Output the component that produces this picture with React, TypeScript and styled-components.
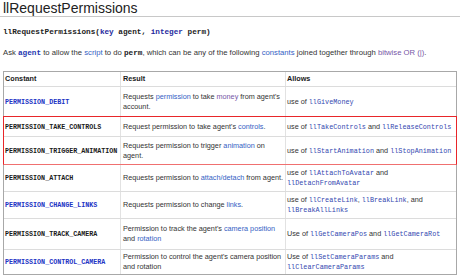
import React from "react"
import styled, { createGlobalStyle } from "styled-components"

const Global = createGlobalStyle`
  body {
    margin: 0;
    background: #fff;
    font-family: "Liberation Sans", Arial, sans-serif;
    color: #333;
  }
`

const mono = `"Liberation Mono", "Courier New", monospace`

const Page = styled.div`
  display: flex;
  flex-direction: column;
  width: 460px;
`

const Title = styled.h1`
  margin: 0;
  padding-left: 3px;
  height: 16px;
  font-size: 14px;
  line-height: 16px;
  font-weight: normal;
  color: #222;
  border-bottom: 1px solid #c8c8c8;
`

const Signature = styled.div`
  margin: 10px 0 0 3px;
  font-family: ${mono};
  font-size: 7.7px;
  line-height: 10px;
  font-weight: bold;
  color: #222;
  .type {
    color: #1f2a9e;
  }
`

const Desc = styled.p`
  margin: 10px 0 0 3px;
  font-size: 7.7px;
  line-height: 11px;
  color: #333;
`

const Link = styled.span<{ $visited?: boolean }>`
  color: ${p => (p.$visited ? "#7656a6" : "#3461c4")};
`

const Code = styled.span<{ $blue?: boolean }>`
  font-family: ${mono};
  font-weight: bold;
  font-size: 7.7px;
  color: ${p => (p.$blue ? "#2537b0" : "#222")};
`

const Fn = styled.span`
  font-family: ${mono};
  font-size: 6.8px;
  color: #3448b0;
`

const Table = styled.div`
  margin: 12px 0 0 3px;
  width: 454px;
  box-sizing: border-box;
  border: 1px solid #a8a8a8;
  display: flex;
  flex-direction: column;
`

const Row = styled.div<{ $h: number; $sep?: boolean }>`
  display: grid;
  grid-template-columns: 117px 165px 1fr;
  height: ${p => p.$h + (p.$sep ? 1 : 0)}px;
  box-sizing: border-box;
  border-top: ${p => (p.$sep ? "1px solid #dcdcdc" : "none")};
`

const Highlight = styled.div`
  margin: 0 -1px;
  border: 1px solid #e8262a;
  border-bottom-color: #f07070;
`

const Cell = styled.div<{ $pad?: number }>`
  display: flex;
  align-items: center;
  padding-left: ${p => p.$pad ?? 2}px;
  padding-right: 2px;
  box-sizing: border-box;
  border-right: 1px solid #e2e2e2;
  &:last-child {
    border-right: none;
  }
  font-size: 7.25px;
  line-height: 10px;
  color: #333;
`

const Head = styled(Cell)`
  font-weight: bold;
  color: #1a1a1a;
`

const Const = styled.span<{ $blue?: boolean }>`
  font-family: ${mono};
  font-weight: bold;
  font-size: 6.7px;
  color: ${p => (p.$blue ? "#2233c4" : "#1a1a1a")};
`

type Perm = {
  name: string
  blue?: boolean
  h: number
  sep?: boolean
  result: React.ReactNode
  allows: React.ReactNode
}

function PermRow({ p }: { p: Perm }) {
  return (
    <Row $h={p.h} $sep={p.sep}>
      <Cell $pad={1}>
        <Const $blue={p.blue}>{p.name}</Const>
      </Cell>
      <Cell>
        <div>{p.result}</div>
      </Cell>
      <Cell $pad={1}>
        <div>{p.allows}</div>
      </Cell>
    </Row>
  )
}

const debit: Perm = {
  name: "PERMISSION_DEBIT",
  blue: true,
  h: 29,
  sep: true,
  result: (
    <>
      Requests <Link>permission</Link> to take <Link $visited>money</Link> from agent's account.
    </>
  ),
  allows: (
    <>
      use of <Fn>llGiveMoney</Fn>
    </>
  ),
}

const highlighted: Perm[] = [
  {
    name: "PERMISSION_TAKE_CONTROLS",
    h: 19,
    result: (
      <>
        Request permission to take agent's <Link>controls</Link>.
      </>
    ),
    allows: (
      <>
        use of <Fn>llTakeControls</Fn> and <Fn>llReleaseControls</Fn>
      </>
    ),
  },
  {
    name: "PERMISSION_TRIGGER_ANIMATION",
    h: 27,
    sep: true,
    result: (
      <>
        Requests permission to trigger <Link>animation</Link> on agent.
      </>
    ),
    allows: (
      <>
        use of <Fn>llStartAnimation</Fn> and <Fn>llStopAnimation</Fn>
      </>
    ),
  },
]

const rest: Perm[] = [
  {
    name: "PERMISSION_ATTACH",
    h: 26,
    result: (
      <>
        Requests permission to <Link>attach/detach</Link> from agent.
      </>
    ),
    allows: (
      <>
        use of <Fn>llAttachToAvatar</Fn> and <Fn>llDetachFromAvatar</Fn>
      </>
    ),
  },
  {
    name: "PERMISSION_CHANGE_LINKS",
    blue: true,
    h: 26,
    sep: true,
    result: (
      <>
        Requests permission to change <Link>links</Link>.
      </>
    ),
    allows: (
      <>
        use of <Fn>llCreateLink</Fn>, <Fn>llBreakLink</Fn>, and <Fn>llBreakAllLinks</Fn>
      </>
    ),
  },
  {
    name: "PERMISSION_TRACK_CAMERA",
    h: 30,
    sep: true,
    result: (
      <>
        Permission to track the agent's <Link>camera position</Link> and <Link>rotation</Link>
      </>
    ),
    allows: (
      <>
        Use of <Fn>llGetCameraPos</Fn> and <Fn>llGetCameraRot</Fn>
      </>
    ),
  },
  {
    name: "PERMISSION_CONTROL_CAMERA",
    blue: true,
    h: 24,
    sep: true,
    result: <>Permission to control the agent's camera position and rotation</>,
    allows: (
      <>
        Use of <Fn>llSetCameraParams</Fn> and <Fn>llClearCameraParams</Fn>
      </>
    ),
  },
]

export default function App() {
  return (
    <Page>
      <Global />
      <Title>llRequestPermissions</Title>
      <Signature>
        llRequestPermissions(<span className="type">key</span> agent,{" "}
        <span className="type">integer</span> perm)
      </Signature>
      <Desc>
        Ask <Code $blue>agent</Code> to allow the <Link>script</Link> to do <Code>perm</Code>, which can be
        any of the following <Link>constants</Link> joined together through{" "}
        <Link $visited>bitwise OR (|)</Link>.
      </Desc>
      <Table>
        <Row $h={14}>
          <Head $pad={1}>Constant</Head>
          <Head>Result</Head>
          <Head $pad={1}>Allows</Head>
        </Row>
        <PermRow p={debit} />
        <Highlight>
          {highlighted.map(p => (
            <PermRow key={p.name} p={p} />
          ))}
        </Highlight>
        {rest.map(p => (
          <PermRow key={p.name} p={p} />
        ))}
      </Table>
    </Page>
  )
}
